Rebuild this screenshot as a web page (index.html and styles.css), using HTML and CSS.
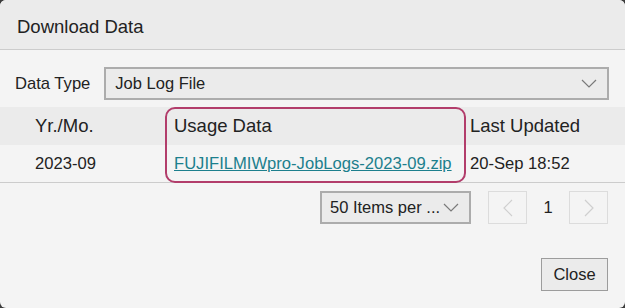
FILE: index.html
```html
<!DOCTYPE html>
<html lang="en">
<head>
    <meta charset="UTF-8">
    <title>Download Data</title>
    <link rel="stylesheet" href="styles.css">
</head>
<body>
    <div class="dialog">
        <!-- Kopfzeile -->
        <div class="dialog-title">Download Data</div>

        <div class="dialog-body">
            <div class="type-row">
                <span class="type-label">Data Type</span>
                <div class="select wide">
                    <span>Job Log File</span>
                    <svg class="chev" width="16" height="9" viewBox="0 0 16 9"><path d="M1 1 L8 8 L15 1" fill="none" stroke="#7a7a7a" stroke-width="1.2"/></svg>
                </div>
            </div>

            <div class="table">
                <div class="row head">
                    <div class="cell">Yr./Mo.</div>
                    <div class="cell">Usage Data</div>
                    <div class="cell">Last Updated</div>
                </div>
                <div class="row">
                    <div class="cell">2023-09</div>
                    <div class="cell"><a href="#" class="file-link">FUJIFILMIWpro-JobLogs-2023-09.zip</a></div>
                    <div class="cell">20-Sep 18:52</div>
                </div>
                <div class="highlight"></div>
            </div>

            <div class="pager">
                <div class="select per-page">
                    <span>50 Items per ...</span>
                    <svg class="chev" width="16" height="9" viewBox="0 0 16 9"><path d="M1 1 L8 8 L15 1" fill="none" stroke="#7a7a7a" stroke-width="1.2"/></svg>
                </div>
                <button class="page-btn"><svg width="10" height="18" viewBox="0 0 10 18"><path d="M9 1 L1 9 L9 17" fill="none" stroke="#cfcfcf" stroke-width="1.2"/></svg></button>
                <span class="page-num">1</span>
                <button class="page-btn"><svg width="10" height="18" viewBox="0 0 10 18"><path d="M1 1 L9 9 L1 17" fill="none" stroke="#cfcfcf" stroke-width="1.2"/></svg></button>
            </div>

            <div class="actions">
                <button class="close-btn">Close</button>
            </div>
        </div>
    </div>
</body>
</html>
```

FILE: styles.css
```css
:root {
    --bar: #ebebeb;
    --bg: #f4f4f4;
    --line: #cccccc;
    --text: #222222;
    --accent: #b23d6b;
    --link: #1c7f8d;
}

* {
    box-sizing: border-box;
}

body {
    margin: 0;
    width: 625px;
    height: 308px;
    background: #3c3c3c;
    font-family: "Liberation Sans", Arial, sans-serif;
    color: var(--text);
}

.dialog {
    height: 308px;
    background: var(--bg);
    border-radius: 6px;
    overflow: hidden;
}

.dialog-title {
    height: 50px;
    background: var(--bar);
    border-bottom: 1px solid var(--line);
    padding: 16px 0 0 17px;
    font-size: 18.5px;
}

.dialog-body {
    padding-top: 17px;
}

.type-row {
    display: flex;
    align-items: center;
    gap: 14px;
    padding: 0 16px 0 15px;
}

.type-label {
    font-size: 16.6px;
}

.select {
    display: flex;
    align-items: center;
    justify-content: space-between;
    height: 33px;
    background: var(--bar);
    border: 2px solid #acacac;
    font-size: 16.5px;
    padding: 0 10px 0 8px;
}

.select.wide {
    flex: 1;
    padding-left: 9px;
}

.table {
    position: relative;
    margin-top: 7px;
}

.row {
    display: grid;
    grid-template-columns: 139px 296px 1fr;
    padding-left: 26px;
    height: 38px;
    align-items: center;
    font-size: 16.6px;
    border-bottom: 1px solid var(--line);
}

.row.head {
    background: var(--bar);
    font-size: 18.5px;
    border-bottom: none;
    height: 38px;
}

.cell {
    padding-left: 9px;
    white-space: nowrap;
}

.file-link {
    color: var(--link);
}

.highlight {
    position: absolute;
    left: 165px;
    top: 0;
    width: 301px;
    height: 76px;
    border: 2px solid var(--accent);
    border-radius: 10px;
}

.pager {
    display: flex;
    align-items: center;
    justify-content: flex-end;
    padding: 8px 17px 0 0;
}

.per-page {
    width: 151px;
    margin-right: 17px;
}

.page-btn {
    width: 39px;
    height: 33px;
    background: var(--bg);
    border: 1px solid #dcdcdc;
    display: flex;
    align-items: center;
    justify-content: center;
    padding: 0;
}

.page-num {
    width: 42px;
    text-align: center;
    font-size: 16.5px;
}

.actions {
    display: flex;
    justify-content: flex-end;
    padding: 34px 17px 0 0;
}

.close-btn {
    width: 67px;
    height: 33px;
    background: var(--bar);
    border: 1px solid #9c9c9c;
    font-family: inherit;
    font-size: 16.5px;
    color: var(--text);
    padding: 0;
}
```
